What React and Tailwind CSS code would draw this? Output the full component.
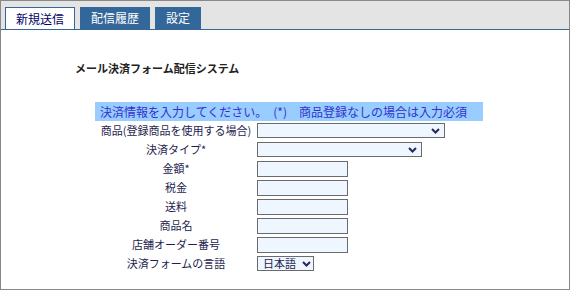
import React from "react";

const rows = [
  { label: "商品(登録商品を使用する場合)", kind: "select", w: "w-[188px]" },
  { label: "決済タイプ*", kind: "select", w: "w-[165px]" },
  { label: "金額*", kind: "input" },
  { label: "税金", kind: "input" },
  { label: "送料", kind: "input" },
  { label: "商品名", kind: "input" },
  { label: "店舗オーダー番号", kind: "input" },
  { label: "決済フォームの言語", kind: "lang" },
];

function Chevron() {
  return (
    <svg width="9" height="6" viewBox="0 0 9 6" className="shrink-0">
      <path d="M1 1 L4.5 4.5 L8 1" fill="none" stroke="#27275e" strokeWidth="2" />
    </svg>
  );
}

function Field({ kind, w }) {
  if (kind === "select") {
    return (
      <div className={`${w} h-[15px] border border-[#6b6b6b] bg-[#eef6ff] flex items-center justify-end pr-[4px]`}>
        <Chevron />
      </div>
    );
  }
  if (kind === "lang") {
    return (
      <div className="w-[57px] h-[15px] border border-[#6b6b6b] bg-[#eef6ff] flex items-center gap-[6px] pl-[5px] text-[11px] leading-none text-[#1e1e50]">
        <span>日本語</span>
        <Chevron />
      </div>
    );
  }
  return <div className="w-[91px] h-[16px] border border-[#6b6b6b] bg-[#eef6ff]" />;
}

export default function App() {
  return (
    <div className="w-[570px] h-[290px] border border-[#888888] bg-white font-['Noto_Sans_CJK_JP',sans-serif] overflow-hidden">
      <div className="h-[29px] bg-[#e4e4e4] border-b border-[#336699] flex items-end gap-[5px] pl-[4px]">
        <div className="w-[70px] h-[22px] bg-white border border-b-0 border-[#336699] flex items-center justify-center text-[12px] leading-none text-[#000066]">
          新規送信
        </div>
        <div className="w-[70px] h-[22px] bg-[#336699] flex items-center justify-center text-[12px] leading-none text-white">
          配信履歴
        </div>
        <div className="w-[46px] h-[22px] bg-[#336699] flex items-center justify-center text-[12px] leading-none text-white">
          設定
        </div>
      </div>

      <div className="pl-[74px] pt-[33px] text-[11px] leading-none font-bold text-[#222222]">
        メール決済フォーム配信システム
      </div>

      <div className="ml-[94px] mt-[28px] w-[388px]">
        <div className="h-[19px] bg-[#99ccff] flex items-center pl-[5px] text-[12px] leading-none text-[#3333cc] whitespace-pre">
          決済情報を入力してください。　(*)　商品登録なしの場合は入力必須
        </div>
        {rows.map((r) => (
          <div key={r.label} className="h-[19px] flex items-center">
            <div className="w-[162px] text-center text-[11px] leading-none text-[#1e1e50] whitespace-nowrap">
              {r.label}
            </div>
            <Field kind={r.kind} w={r.w} />
          </div>
        ))}
      </div>
    </div>
  );
}
